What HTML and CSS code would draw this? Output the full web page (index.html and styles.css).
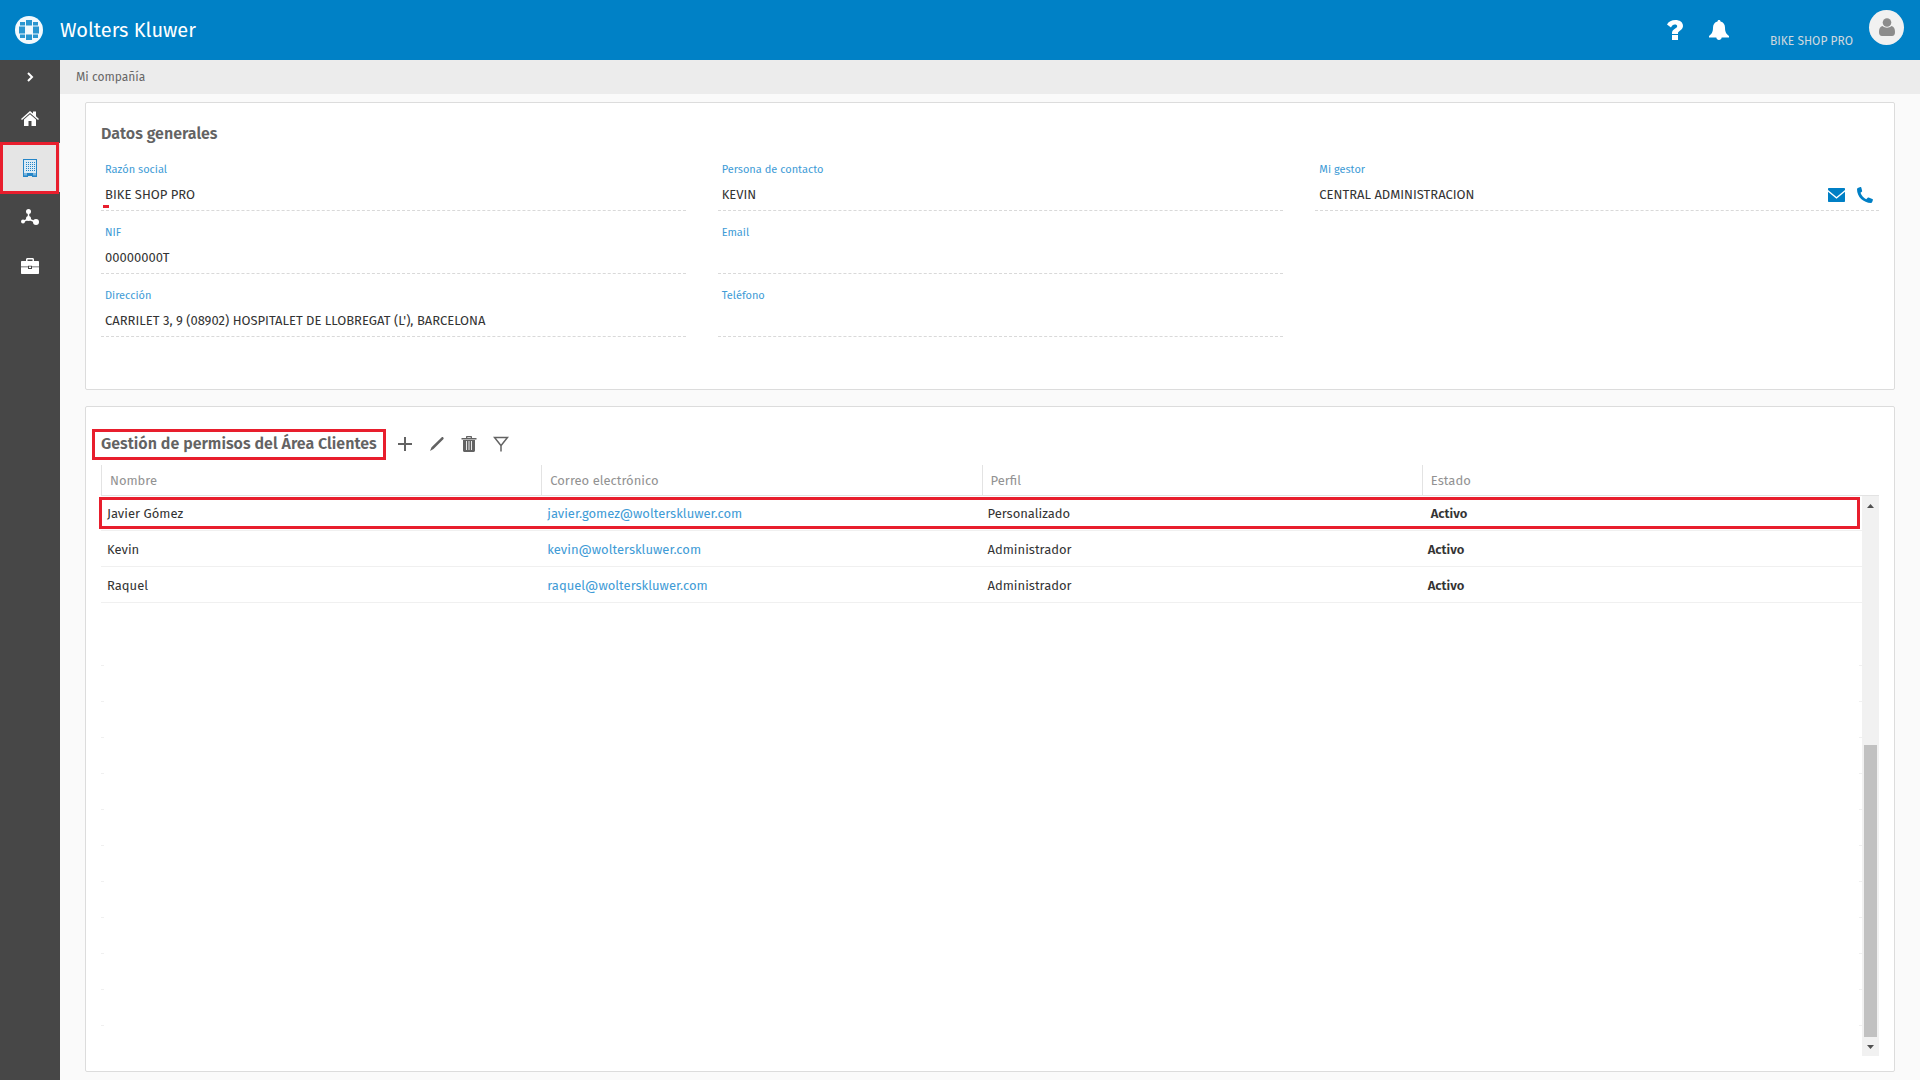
FILE: index.html
```html
<!DOCTYPE html>
<html lang="es">
<head>
    <meta charset="UTF-8">
    <meta name="viewport" content="width=device-width, initial-scale=1.0">
    <title>Mi compañía</title>
    <link rel="stylesheet" href="styles.css">
</head>
<body>

    <header class="topbar">
        <svg class="logo" viewBox="0 0 28 28" aria-hidden="true">
            <circle cx="14" cy="14" r="14" fill="#f2f9fd"/>
            <path d="M5 9.500V6h5v3.500zM11 4h6v5.500h-6zM18 6h5v3.500h-5zM4 10.500h6v7H4zM18 10.500h6v7h-6zM5 18.500h5V22H5zM11 18.500h6V24h-6zM18 18.500h5V22h-5z" fill="#2a96d0"/>
        </svg>
        <span class="brand">Wolters Kluwer</span>

        <div class="topbar-right">
            <button class="top-btn" aria-label="Ayuda">
                <svg width="16" height="20" viewBox="0 0 16 20"><path d="M5 14h6v-1c0-2 5-3 5-7 0-4-3.500-6-7.500-6C4.500 0 1.500 1.500 0 4.500l4 3C5 5.500 6 4.500 7.800 4.500c1.500 0 2.400.7 2.400 1.700C10.200 8.500 5 9 5 13zM5 15h6v5H5z" fill="#fff"/></svg>
            </button>
            <button class="top-btn" aria-label="Avisos">
                <svg width="20" height="20" viewBox="0 0 20 20"><path d="M10 0c1 0 1.500.6 1.500 1.500C14.500 2.200 16 4.500 16 7.500c0 5 1.500 6.500 4 8.500v1.500H0V16c2.500-2 4-3.500 4-8.500 0-3 1.500-5.300 4.500-6C8.500.6 9 0 10 0zM7.300 17.500h5.400c-.2 1.600-1.300 2.500-2.700 2.500s-2.500-.9-2.700-2.500z" fill="#fff"/></svg>
            </button>
            <span class="company">BIKE SHOP PRO</span>
            <button class="avatar" aria-label="Usuario">
                <svg width="16" height="18" viewBox="0 0 16 18"><circle cx="8" cy="4.500" r="4.300" fill="#8c8c8c"/><path d="M3.500 8c2.500 2.300 6.500 2.300 9 0C15 8.500 16 11 16 14c0 2.500-1 4-3 4H3c-2 0-3-1.500-3-4 0-3 1-5.500 3.500-6z" fill="#8c8c8c"/></svg>
            </button>
        </div>
    </header>

    <div class="layout">
        <nav class="sidebar">
            <button class="expand" aria-label="Expandir menú">
                <svg width="8" height="10" viewBox="0 0 8 10"><path d="M2 1l4 4-4 4" fill="none" stroke="#fff" stroke-width="2"/></svg>
            </button>
            <a href="#" class="side-link" aria-label="Inicio">
                <svg width="18" height="15" viewBox="0 0 18 15"><path d="M9 3.200l6 5.300V15h-4.500v-5h-3v5H3V8.500zM9 0l3 2.600V.5h3v4.700l3 2.700-1 1.100-8-7-8 7-1-1.100z" fill="#fff"/></svg>
            </a>
            <a href="#" class="side-link active" aria-label="Mi compañía">
                <svg width="14" height="18" viewBox="0 0 14 18"><path d="M0 0h14v18H9v-3H5v3H0z" fill="#2585c7"/><path d="M1 1h12v13H1z" fill="#dcebf5"/><path d="M3 3h1v1H3zM5 3h1v1H5zM7 3h1v1H7zM9 3h1v1H9zM11 3h1v1h-1zM3 5h1v1H3zM5 5h1v1H5zM7 5h1v1H7zM9 5h1v1H9zM11 5h1v1h-1zM3 7h1v1H3zM5 7h1v1H5zM7 7h1v1H7zM9 7h1v1H9zM11 7h1v1h-1zM3 9h1v1H3zM5 9h1v1H5zM7 9h1v1H7zM9 9h1v1H9zM11 9h1v1h-1zM3 11h1v1H3zM5 11h1v1H5zM7 11h1v1H7zM9 11h1v1H9zM11 11h1v1h-1z" fill="#2585c7"/><path d="M1 14h3v2.500H1zM10 14h3v2.500h-3z" fill="#7db6dd"/><path d="M5 14h4v3H5z" fill="#2585c7"/></svg>
            </a>
            <a href="#" class="side-link" aria-label="Conexiones">
                <svg width="18" height="16" viewBox="0 0 18 16"><path d="M7.500 2.500V10L2 12.500M7.500 10l7 3" stroke="#fff" stroke-width="1.500" fill="none"/><g fill="#fff"><circle cx="7.500" cy="2.500" r="2.500"/><circle cx="7.500" cy="9.500" r="2.500"/><circle cx="2" cy="12.500" r="2"/><circle cx="15" cy="13" r="3"/></g></svg>
            </a>
            <a href="#" class="side-link" aria-label="Documentos">
                <svg width="18" height="16" viewBox="0 0 18 16"><path d="M5 3V1.500C5 .6 5.600 0 6.500 0h5c.9 0 1.500.6 1.500 1.500V3h4c.6 0 1 .4 1 1v4.500h-7V7.800H7v.7H0V4c0-.6.4-1 1-1zm1.500 0h5V1.500h-5zM0 9.200h7V11h4V9.200h7V15c0 .6-.4 1-1 1H1c-.6 0-1-.4-1-1zM8 8.500h2V10H8z" fill="#fff"/></svg>
            </a>
        </nav>

        <main class="main">
            <div class="breadcrumb">Mi compañía</div>

            <section class="card">
                <h2>Datos generales</h2>
                <div class="fields">
                    <dl class="column">
                        <div class="field marked"><dt>Razón social</dt><dd>BIKE SHOP PRO</dd></div>
                        <div class="field"><dt>NIF</dt><dd>00000000T</dd></div>
                        <div class="field"><dt>Dirección</dt><dd>CARRILET 3, 9 (08902) HOSPITALET DE LLOBREGAT (L'), BARCELONA</dd></div>
                    </dl>
                    <dl class="column">
                        <div class="field"><dt>Persona de contacto</dt><dd>KEVIN</dd></div>
                        <div class="field"><dt>Email</dt><dd></dd></div>
                        <div class="field"><dt>Teléfono</dt><dd></dd></div>
                    </dl>
                    <dl class="column">
                        <div class="field">
                            <dt>Mi gestor</dt>
                            <dd>CENTRAL ADMINISTRACION
                                <span class="contact">
                                    <button aria-label="Enviar correo"><svg width="17" height="14" viewBox="0 0 17 14"><path d="M1 0h15c.6 0 1 .4 1 1v1L8.500 9 0 2V1c0-.6.4-1 1-1zM0 3.700l8.500 7 8.500-7V13c0 .6-.4 1-1 1H1c-.6 0-1-.4-1-1z" fill="#007fc5"/></svg></button>
                                    <button aria-label="Llamar"><svg width="16" height="16" viewBox="0 0 16 16"><path d="M.8 1L3.300 0c.5-.1.9.1 1 .5l.8 3.200c.1.400 0 .7-.3 1L3.500 5.800c1 2.800 3 5 5.700 6.400l1.500-1.400c.3-.3.7-.4 1-.2l3.600 1.300c.5.2.7.6.6 1l-.7 2.200c-.2.500-.5.800-1 .8C6.500 16 0 9.800 0 2.200 0 1.600.3 1.200.8 1z" fill="#007fc5"/></svg></button>
                                </span>
                            </dd>
                        </div>
                    </dl>
                </div>
            </section>

            <section class="card permissions">
                <div class="toolbar">
                    <h2 class="highlight">Gestión de permisos del Área Clientes</h2>
                    <button aria-label="Añadir"><svg width="16" height="16" viewBox="0 0 16 16"><path d="M8 1v14M1 8h14" stroke="#636363" stroke-width="2"/></svg></button>
                    <button aria-label="Editar"><svg width="16" height="16" viewBox="0 0 16 16"><path d="M12.500 1.500c.5-.6 1.300-.6 1.800-.1s.5 1.200 0 1.800L4.500 13 1 15l1.500-3.800z" fill="#636363"/></svg></button>
                    <button aria-label="Eliminar"><svg width="16" height="16" viewBox="0 0 16 16"><path d="M5 2V.800C5 .3 5.300 0 5.800 0h4.400c.5 0 .8.3.8.8V2h4.500v1.500H.5V2zm1.300 0h3.400V1.200H6.300zM2 4h12v10.500c0 .9-.6 1.500-1.500 1.500h-9c-.9 0-1.500-.6-1.500-1.500z" fill="#636363"/><path d="M5.500 5v9M8 5v9M10.500 5v9" stroke="#e8e8e8"/></svg></button>
                    <button aria-label="Filtrar"><svg width="16" height="16" viewBox="0 0 16 16"><path d="M1.500 1.500h13L8.500 9h-1zM8 9v6.500" fill="none" stroke="#636363" stroke-width="1.500"/></svg></button>
                </div>

                <div class="grid">
                    <div class="rows">
                        <table>
                            <thead>
                                <tr><th>Nombre</th><th>Correo electrónico</th><th>Perfil</th><th>Estado</th></tr>
                            </thead>
                            <tbody>
                                <tr class="selected">
                                    <td>Javier Gómez</td>
                                    <td><a href="mailto:javier.gomez@wolterskluwer.com">javier.gomez@wolterskluwer.com</a></td>
                                    <td>Personalizado</td>
                                    <td class="state">Activo</td>
                                </tr>
                                <tr>
                                    <td>Kevin</td>
                                    <td><a href="mailto:kevin@wolterskluwer.com">kevin@wolterskluwer.com</a></td>
                                    <td>Administrador</td>
                                    <td class="state">Activo</td>
                                </tr>
                                <tr>
                                    <td>Raquel</td>
                                    <td><a href="mailto:raquel@wolterskluwer.com">raquel@wolterskluwer.com</a></td>
                                    <td>Administrador</td>
                                    <td class="state">Activo</td>
                                </tr>
                            </tbody>
                        </table>
                        <div class="empty-rows"></div>
                    </div>
                    <div class="scroll-col">
                        <div class="scroll-head"></div>
                        <div class="scrollbar">
                            <button aria-label="Subir"><svg width="7" height="4" viewBox="0 0 7 4"><path d="M0 4l3.500-4L7 4z" fill="#505050"/></svg></button>
                            <div class="track"><div class="thumb"></div></div>
                            <button aria-label="Bajar"><svg width="7" height="4" viewBox="0 0 7 4"><path d="M0 0l3.500 4L7 0z" fill="#505050"/></svg></button>
                        </div>
                    </div>
                </div>
            </section>
        </main>
    </div>

</body>
</html>
```

FILE: styles.css
```css
* {
    box-sizing: border-box;
    margin: 0;
    padding: 0;
}

body {
    display: flex;
    flex-direction: column;
    min-height: 100vh;
    font-family: "Fira Sans", "Noto Sans", sans-serif;
    font-size: 13px;
    line-height: 20px;
    color: #333;
    background: #fafafa;
}

button {
    display: flex;
    align-items: center;
    justify-content: center;
    border: none;
    background: none;
    cursor: pointer;
}

svg {
    display: block;
}

a {
    color: #409bd6;
    text-decoration: none;
}

/* top bar */
.topbar {
    display: flex;
    align-items: center;
    height: 60px;
    padding: 0 16px 0 15px;
    background: #0081c6;
    color: #fff;
}

.logo {
    width: 28px;
    height: 28px;
    margin-right: 17px;
}

.brand {
    font-size: 20px;
    line-height: 24px;
}

.topbar-right {
    display: flex;
    align-items: center;
    margin-left: auto;
}

.top-btn {
    width: 44px;
    height: 44px;
}

.company {
    margin: 22px 16px 0 29px;
    font-size: 12px;
    color: #cfd8de;
}

.avatar {
    width: 35px;
    height: 35px;
    margin-bottom: 6px;
    border-radius: 50%;
    background: #f1f1f1;
}

/* side menu */
.layout {
    display: flex;
    flex: 1;
}

.sidebar {
    width: 60px;
    background: #474747;
}

.expand {
    width: 100%;
    height: 34px;
}

.side-link {
    position: relative;
    display: flex;
    align-items: center;
    justify-content: center;
    height: 49px;
}

.active {
    background: #e5e5e5;
}

.active::after {
    content: "";
    position: absolute;
    inset: -1px 1px -2px 0;
    border: 3px solid #e81e2d;
}

/* content */
.main {
    flex: 1;
    display: flex;
    flex-direction: column;
}

.breadcrumb {
    height: 34px;
    padding: 0 16px;
    line-height: 34px;
    font-size: 12px;
    color: #666;
    background: #ececec;
}

.card {
    margin: 8px 25px;
    padding: 20px 15px;
    border: 1px solid #dcdcdc;
    border-radius: 2px;
    background: #fff;
}

h2 {
    font-size: 16px;
    line-height: 22px;
    font-weight: 600;
    color: #636363;
}

.fields {
    display: grid;
    grid-template-columns: 585fr 566fr 564fr;
    gap: 32px;
    padding: 14px 0 32px;
}

.column {
    display: flex;
    flex-direction: column;
    gap: 11px;
}

.field {
    position: relative;
    height: 52px;
    padding: 1px 4px 0;
    border-bottom: 1px dashed #d9d9d9;
}

.field dt {
    font-size: 11px;
    color: #409bd6;
}

.field dd {
    display: flex;
    justify-content: space-between;
    padding-top: 5px;
}

.marked::after {
    content: "";
    position: absolute;
    left: 2px;
    bottom: 2px;
    width: 6px;
    height: 3px;
    background: #e81e2d;
}

.contact {
    display: flex;
    gap: 12px;
    padding-right: 2px;
}

/* permissions */
.permissions {
    flex: 1;
    display: flex;
    flex-direction: column;
    padding: 22px 15px 15px;
}

.toolbar {
    display: flex;
    align-items: center;
    gap: 16px;
    margin-bottom: 5px;
}

.toolbar button {
    padding-bottom: 2px;
}

.highlight {
    margin: 0 -5px 0 -9px;
    padding: 1px 6px 2px;
    border: 3px solid #e81e2d;
}

.grid {
    flex: 1;
    display: flex;
}

.rows {
    flex: 1;
    display: flex;
    flex-direction: column;
}

table {
    width: 100%;
    table-layout: fixed;
    border-collapse: separate;
    border-spacing: 0;
}

th {
    height: 31px;
    padding: 2px 8px 0;
    border-left: 1px solid #e3e3e3;
    border-bottom: 1px solid #e3e3e3;
    text-align: left;
    font-weight: 400;
    color: #929292;
}

td {
    height: 36px;
    padding: 2px 6px 0;
    border-bottom: 1px solid #f0f0f0;
}

.state {
    font-weight: 600;
}

.selected {
    position: relative;
}

.selected td {
    height: 35px;
}

.selected .state {
    padding-left: 9px;
}

.selected td:first-child::after {
    content: "";
    position: absolute;
    inset: 1px 2px 2px -2px;
    border: 3px solid #e81e2d;
}

/* ends of the empty row lines, at both sides of the grid */
.empty-rows {
    flex: 1;
    display: flex;
    justify-content: space-between;
    margin-top: 27px;
}

.empty-rows::before,
.empty-rows::after {
    content: "";
    width: 3px;
    background: repeating-linear-gradient(#fff 0 35px, #f0f0f0 35px 36px);
}

.scroll-col {
    display: flex;
    flex-direction: column;
    width: 17px;
}

.scroll-head {
    height: 31px;
    border-bottom: 1px solid #e3e3e3;
}

.scrollbar {
    flex: 1;
    display: flex;
    flex-direction: column;
    background: #f1f1f1;
}

.scrollbar button {
    height: 19px;
}

.track {
    flex: 1;
    display: flex;
    align-items: flex-end;
    padding: 0 2px;
}

.thumb {
    width: 100%;
    height: 56%;
    background: #c1c1c1;
}
```
